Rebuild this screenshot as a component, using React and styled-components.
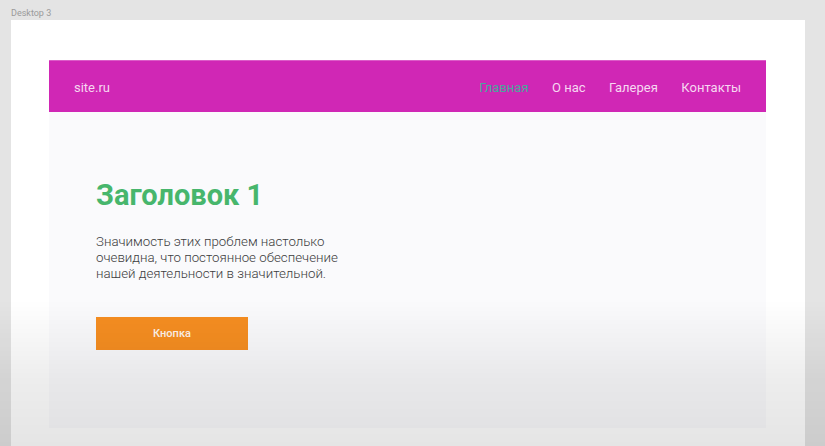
import React from 'react';
import styled, { createGlobalStyle } from 'styled-components';

const GlobalStyle = createGlobalStyle`
  html, body {
    margin: 0;
    padding: 0;
    height: 100%;
    background: #e4e4e4;
    font-family: Roboto, 'Liberation Sans', sans-serif;
  }
  #root {
    height: 100%;
  }
`;

const navItems = ['Главная', 'О нас', 'Галерея', 'Контакты'];

function App() {
  return (
    <>
      <GlobalStyle />
      <Canvas>
        <FrameLabel>Desktop 3</FrameLabel>
        <Frame>
          <Page>
            <Header>
              <Logo>site.ru</Logo>
              <Nav>
                {navItems.map((item, i) => (
                  <NavLink key={item} active={i === 0}>
                    {item}
                  </NavLink>
                ))}
              </Nav>
            </Header>
            <Hero>
              <Title>Заголовок 1</Title>
              <Lead>
                Значимость этих проблем настолько очевидна, что постоянное обеспечение нашей
                деятельности в значительной.
              </Lead>
              <Button>Кнопка</Button>
            </Hero>
          </Page>
        </Frame>
        <Shade />
      </Canvas>
    </>
  );
}

const Canvas = styled.div`
  height: 446px;
  padding: 0 20px 0 11px;
  box-sizing: border-box;
  display: flex;
  flex-direction: column;
  overflow: hidden;
`;

const FrameLabel = styled.div`
  height: 20px;
  padding-top: 8px;
  line-height: 10px;
  font-size: 9px;
  color: #9a9a9a;
  box-sizing: border-box;
`;

const Frame = styled.div`
  flex: 1;
  background: #ffffff;
  padding: 40px 39px 18px 38px;
  box-sizing: border-box;
  display: flex;
`;

const Page = styled.div`
  flex: 1;
  display: flex;
  flex-direction: column;
  background: #fafafc;
`;

const Header = styled.header`
  height: 52px;
  background: #d027b5;
  display: flex;
  align-items: center;
  justify-content: space-between;
  padding: 0 25px;
  border-top: 1px solid #dc5cc8;
  box-sizing: border-box;
`;

const Logo = styled.div`
  color: #f6d6f0;
  font-size: 13px;
  padding-top: 1px;
`;

const Nav = styled.nav`
  display: flex;
  gap: 23.5px;
  padding-top: 1px;
`;

const NavLink = styled.a`
  font-size: 13px;
  color: ${(p) => (p.active ? '#48a89c' : '#f6d8f1')};
  text-decoration: none;
  cursor: pointer;
`;

const Hero = styled.section`
  display: flex;
  flex-direction: column;
  align-items: flex-start;
  padding: 65px 47px 0;
`;

const Title = styled.h1`
  margin: 0;
  font-size: 29px;
  font-weight: 700;
  color: #47b66c;
  line-height: 37px;
`;

const Lead = styled.p`
  margin: 20px 0 0;
  width: 250px;
  font-size: 13.3px;
  line-height: 16px;
  font-weight: 300;
  color: #3c3c3c;
`;

const Button = styled.button`
  margin-top: 35px;
  width: 152px;
  height: 33px;
  border: none;
  background: #f68e21;
  color: #fff4ea;
  font-family: Roboto, 'Liberation Sans', sans-serif;
  font-size: 11px;
  font-weight: 500;
  cursor: pointer;
`;

const Shade = styled.div`
  position: fixed;
  inset: 0;
  pointer-events: none;
  background: linear-gradient(
    to bottom,
    rgba(0, 0, 0, 0) 0,
    rgba(0, 0, 0, 0) 300px,
    rgba(0, 0, 0, 0.07) 380px,
    rgba(0, 0, 0, 0.1) 446px
  );
`;

export default App;
